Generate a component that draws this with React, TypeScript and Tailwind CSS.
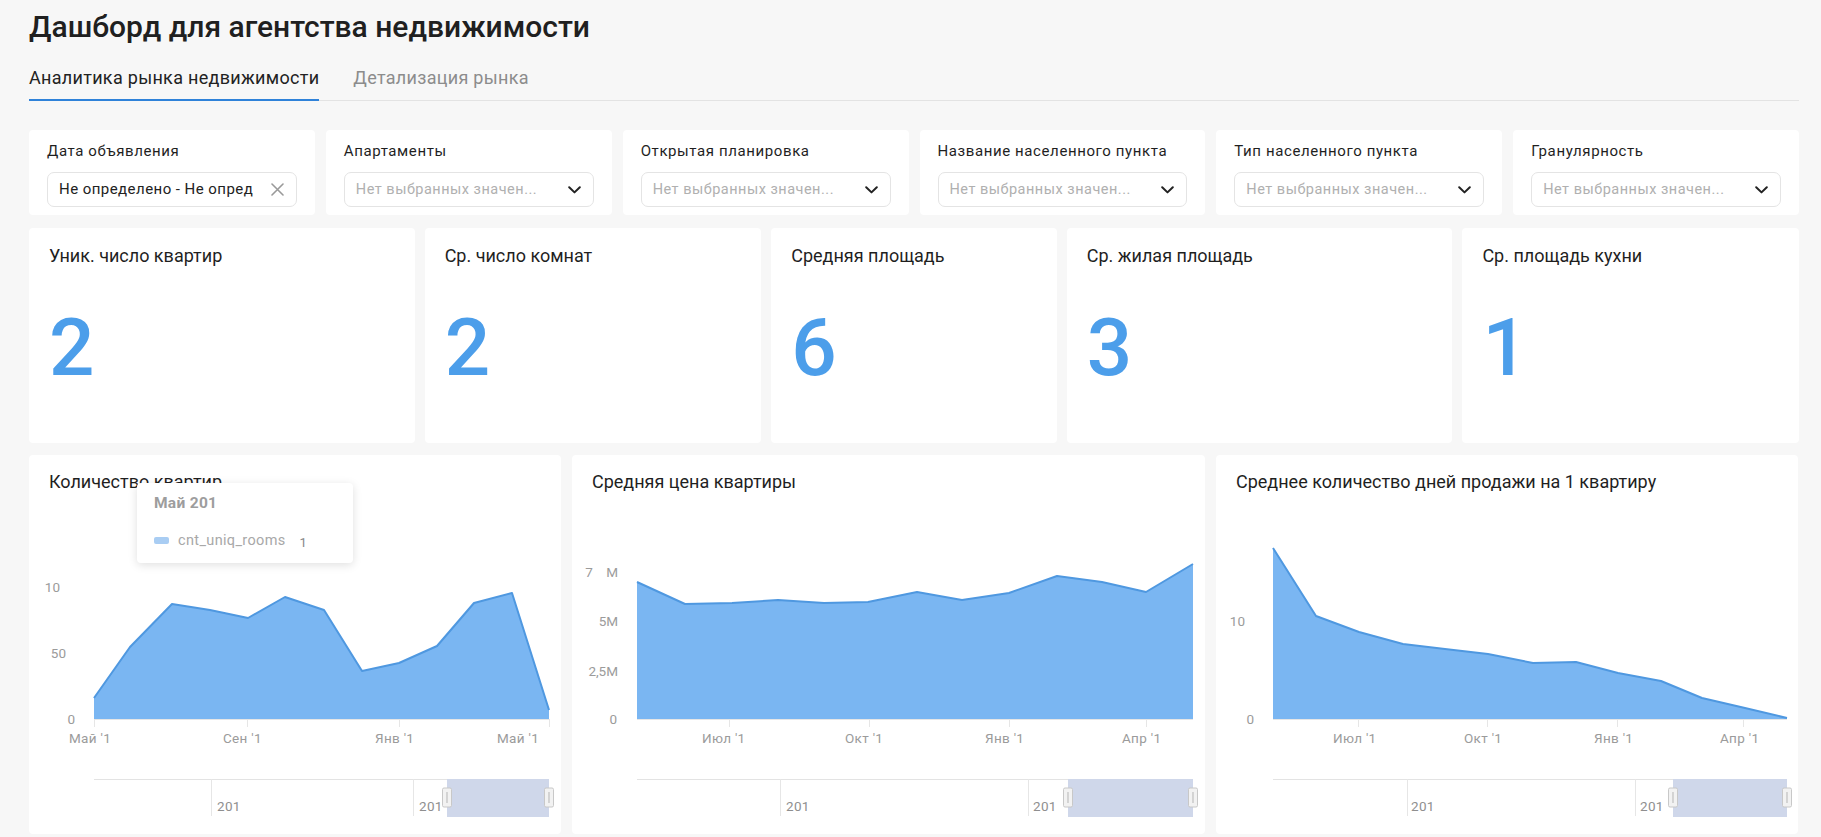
import React from "react";

type Pt = [number, number];

interface ChartProps {
  title: string;
  width: number;
  plotLeft: number;
  plotRight: number;
  points: Pt[];
  yLabels: { text: string; x: number; y: number }[];
  ticks: number[];
  xLabels: { text: string; x: number }[];
  navDividers: number[];
  navLabels: number[];
  navSelect: number;
  tooltip?: boolean;
}

const filters = [
  { label: "Дата объявления", value: "Не определено - Не опред", clear: true },
  { label: "Апартаменты" },
  { label: "Открытая планировка" },
  { label: "Название населенного пункта" },
  { label: "Тип населенного пункта" },
  { label: "Гранулярность" },
];

const kpis = [
  { title: "Уник. число квартир", value: "2" },
  { title: "Ср. число комнат", value: "2" },
  { title: "Средняя площадь", value: "6" },
  { title: "Ср. жилая площадь", value: "3" },
  { title: "Ср. площадь кухни", value: "1" },
];

const BASE = 210;
const NAV_TOP = 270;

const Chevron = () => (
  <svg width="13" height="8" viewBox="0 0 13 8" fill="none">
    <path d="M1.2 1.2 L6.5 6.4 L11.8 1.2" stroke="#222" strokeWidth="2" strokeLinecap="round" strokeLinejoin="round" />
  </svg>
);

const Cross = () => (
  <svg width="13" height="13" viewBox="0 0 13 13" fill="none">
    <path d="M1 1 L12 12 M12 1 L1 12" stroke="#9a9a9a" strokeWidth="1.6" strokeLinecap="round" />
  </svg>
);

const FilterCard = ({ label, value, clear }: { label: string; value?: string; clear?: boolean }) => (
  <div className="bg-white rounded-[4px] px-[18px] pt-[10px] pb-[8px]">
    <div className="text-[15px] leading-[22px] tracking-[0.6px] text-[#1f1f1f] whitespace-nowrap">{label}</div>
    <div className="mt-[10px] h-[35px] rounded-[7px] border border-[#e4e4e4] pl-[11px] pr-[12px] flex items-center justify-between">
      {value ? (
        <span className="text-[15px] tracking-[0.45px] text-[#222] whitespace-nowrap overflow-hidden">{value}</span>
      ) : (
        <span className="text-[14.5px] tracking-[0.5px] text-[#b0b0b0] whitespace-nowrap">Нет выбранных значен...</span>
      )}
      {clear ? <Cross /> : <Chevron />}
    </div>
  </div>
);

const Handle = ({ x }: { x: number }) => (
  <g>
    <rect x={x - 4.5} y={NAV_TOP + 9} width="9" height="19" rx="1.5" fill="#f2f2f2" stroke="#c8c8c8" />
    <line x1={x} y1={NAV_TOP + 13} x2={x} y2={NAV_TOP + 24} stroke="#b5b5b5" />
  </g>
);

const AreaChart = (p: ChartProps) => {
  const line = p.points.map(([x, y]) => `${x},${y}`).join(" ");
  const first = p.points[0];
  const last = p.points[p.points.length - 1];
  const area = `M${first[0]},${BASE} L${line.replace(/ /g, " L")} L${last[0]},${BASE} Z`;
  return (
    <div className="relative bg-white rounded-[4px]" style={{ width: p.width }}>
      <div className="px-[20px] pt-[15px] pb-[15px] text-[18px] leading-[24px] text-[#1f1f1f] whitespace-nowrap">
        {p.title}
      </div>
      <svg width={p.width} height="325" className="block" fontFamily="Roboto, 'Liberation Sans', sans-serif">
        <path d={area} fill="#7ab6f2" />
        <polyline points={line} fill="none" stroke="#4f98e0" strokeWidth="2" strokeLinejoin="round" />
        <line x1={p.plotLeft} y1={BASE + 0.5} x2={p.plotRight} y2={BASE + 0.5} stroke="#e6e6e6" />
        {p.ticks.map((t) => (
          <line key={t} x1={t + 0.5} y1={BASE} x2={t + 0.5} y2={BASE + 8} stroke="#e6e6e6" />
        ))}
        {p.yLabels.map((l) => (
          <text key={l.text} x={l.x} y={l.y + 4.5} textAnchor="end" fontSize="13.5" fill="#9b9b9b" xmlSpace="preserve">
            {l.text}
          </text>
        ))}
        {p.xLabels.map((l, i) => (
          <text key={i} x={l.x} y={BASE + 24} fontSize="13.5" fill="#9b9b9b" letterSpacing="0.3">
            {l.text}
          </text>
        ))}
        <line x1={p.plotLeft} y1={NAV_TOP + 0.5} x2={p.plotRight} y2={NAV_TOP + 0.5} stroke="#e3e3e3" />
        {p.navDividers.map((d) => (
          <line key={d} x1={d + 0.5} y1={NAV_TOP} x2={d + 0.5} y2={NAV_TOP + 37} stroke="#e6e6e6" />
        ))}
        {p.navLabels.map((d) => (
          <text key={d} x={d} y={NAV_TOP + 32} fontSize="13.5" fill="#8f8f8f" letterSpacing="0.3">
            201
          </text>
        ))}
        <rect x={p.navSelect} y={NAV_TOP} width={p.plotRight - p.navSelect} height="38" fill="#cfd7ea" />
        <Handle x={p.navSelect} />
        <Handle x={p.plotRight} />
      </svg>
      {p.tooltip && (
        <div className="absolute left-[108px] top-[28px] w-[216px] h-[80px] bg-white rounded-[4px] shadow-[0_2px_10px_rgba(0,0,0,0.13)] px-[17px] pt-[10px]">
          <div className="text-[15.5px] font-bold tracking-[0.3px] text-[#9d9d9d] leading-[20px]">Май 201</div>
          <div className="mt-[16px] flex items-center text-[14.5px] tracking-[0.35px] text-[#a8a8a8]">
            <span className="w-[15px] h-[7px] rounded-[2px] bg-[#a9cdf3] mr-[9px]" />
            <span>cnt_uniq_rooms</span>
            <span className="ml-[14px] mt-[4px] text-[13px] text-[#888]">1</span>
          </div>
        </div>
      )}
    </div>
  );
};

const charts: ChartProps[] = [
  {
    title: "Количество квартир",
    width: 532,
    plotLeft: 65,
    plotRight: 520,
    points: [
      [65, 189], [101, 138], [143, 95], [181, 101], [219, 109], [256, 88], [295, 101],
      [333, 162], [370, 154], [408, 137], [445, 94], [483, 84], [520, 201],
    ],
    yLabels: [
      { text: "10", x: 31, y: 78 },
      { text: "50", x: 37, y: 144 },
      { text: "0", x: 46, y: 210 },
    ],
    ticks: [65, 218, 370, 520],
    xLabels: [
      { text: "Май '1", x: 40 },
      { text: "Сен '1", x: 194 },
      { text: "Янв '1", x: 346 },
      { text: "Май '1", x: 468 },
    ],
    navDividers: [182, 384],
    navLabels: [188, 390],
    navSelect: 418,
    tooltip: true,
  },
  {
    title: "Средняя цена квартиры",
    width: 633,
    plotLeft: 65,
    plotRight: 621,
    points: [
      [65, 73], [113, 95], [160, 94], [206, 91], [252, 94], [296, 93], [345, 83],
      [390, 91], [437, 84], [485, 67], [530, 73], [574, 83], [621, 55],
    ],
    yLabels: [
      { text: "7    M", x: 46, y: 63 },
      { text: "5M", x: 46, y: 112 },
      { text: "2,5M", x: 46, y: 162 },
      { text: "0", x: 45, y: 210 },
    ],
    ticks: [157, 297, 437, 574],
    xLabels: [
      { text: "Июл '1", x: 130 },
      { text: "Окт '1", x: 273 },
      { text: "Янв '1", x: 413 },
      { text: "Апр '1", x: 550 },
    ],
    navDividers: [208, 456],
    navLabels: [214, 461],
    navSelect: 496,
  },
  {
    title: "Среднее количество дней продажи на 1 квартиру",
    width: 582,
    plotLeft: 57,
    plotRight: 571,
    points: [
      [57, 39], [100, 107], [143, 123], [187, 135], [229, 140], [272, 145], [317, 154],
      [360, 153], [402, 164], [445, 172], [486, 189], [529, 199], [571, 209],
    ],
    yLabels: [
      { text: "10", x: 29, y: 112 },
      { text: "0", x: 38, y: 210 },
    ],
    ticks: [142, 271, 401, 527],
    xLabels: [
      { text: "Июл '1", x: 117 },
      { text: "Окт '1", x: 248 },
      { text: "Янв '1", x: 378 },
      { text: "Апр '1", x: 504 },
    ],
    navDividers: [191, 419],
    navLabels: [195, 424],
    navSelect: 457,
  },
];

export default function App() {
  return (
    <div className="min-h-screen w-full bg-[#f7f7f7] pl-[29px] pr-[22px] pt-[7px] pb-[3px] font-['Roboto','Liberation_Sans',sans-serif] text-[#222]">
      <h1 className="text-[30px] leading-[40px] font-medium text-[#202020]">Дашборд для агентства недвижимости</h1>

      <div className="mt-[19px] flex gap-[34px] border-b border-[#e3e3e3]">
        <div className="pb-[9px] border-b-2 border-[#2f82d9] mb-[-1px] text-[18px] leading-[24px] tracking-[0.3px] text-[#222]">
          Аналитика рынка недвижимости
        </div>
        <div className="pb-[9px] text-[18px] leading-[24px] tracking-[0.3px] text-[#8c8c8c]">Детализация рынка</div>
      </div>

      <div className="mt-[29px] grid grid-cols-6 gap-[11px]">
        {filters.map((f) => (
          <FilterCard key={f.label} {...f} />
        ))}
      </div>

      <div className="mt-[13px] grid grid-cols-[385fr_336fr_285fr_385fr_336fr] gap-[10px]">
        {kpis.map((k) => (
          <div key={k.title} className="bg-white rounded-[4px] h-[215px] px-[20px] pt-[18px]">
            <div className="text-[18px] leading-[20px] text-[#1f1f1f]">{k.title}</div>
            <div className="mt-[42px] text-[80px] leading-none font-medium text-[#4c9eea]">{k.value}</div>
          </div>
        ))}
      </div>

      <div className="mt-[12px] flex gap-[11px]">
        {charts.map((c) => (
          <AreaChart key={c.title} {...c} />
        ))}
      </div>
    </div>
  );
}
